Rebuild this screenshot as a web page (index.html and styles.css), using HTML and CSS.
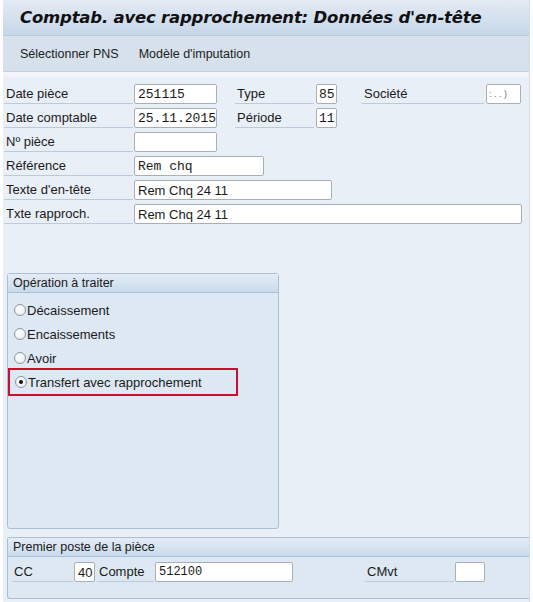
FILE: index.html
```html
<!DOCTYPE html>
<html lang="fr">
<head>
  <meta charset="UTF-8" />
  <title>Comptab. avec rapprochement</title>
  <link rel="stylesheet" href="styles.css">
</head>
<body>

<div class="frame">
  <div class="titlebar">
    <h1>Comptab. avec rapprochement: Données d'en-tête</h1>
  </div>

  <div class="toolbar">
    <span class="tool">Sélectionner PNS</span>
    <span class="tool">Modèle d'imputation</span>
  </div>

  <div class="main">
    <div class="fields">
      <div class="row">
        <span class="lbl w-left">Date pièce</span>
        <span class="inp mono w-date">251115</span>
        <span class="lbl w-mid">Type</span>
        <span class="inp mono w-small">85</span>
        <span class="lbl w-soc">Société</span>
        <span class="inp w-soc-inp">: . . )</span>
      </div>
      <div class="row">
        <span class="lbl w-left">Date comptable</span>
        <span class="inp mono w-date">25.11.2015</span>
        <span class="lbl w-mid">Période</span>
        <span class="inp mono w-small">11</span>
      </div>
      <div class="row">
        <span class="lbl w-left">Nº pièce</span>
        <span class="inp mono w-date"></span>
      </div>
      <div class="row">
        <span class="lbl w-left">Référence</span>
        <span class="inp mono w-ref">Rem chq</span>
      </div>
      <div class="row">
        <span class="lbl w-left">Texte d'en-tête</span>
        <span class="inp w-text">Rem Chq 24 11</span>
      </div>
      <div class="row">
        <span class="lbl w-left">Txte rapproch.</span>
        <span class="inp w-long">Rem Chq 24 11</span>
      </div>
    </div>

    <div class="group group-op">
      <div class="group-head">Opération à traiter</div>
      <div class="radios">
        <div class="radio"><span class="dot"></span>Décaissement</div>
        <div class="radio"><span class="dot"></span>Encaissements</div>
        <div class="radio"><span class="dot"></span>Avoir</div>
        <div class="radio selected"><span class="dot on"></span>Transfert avec rapprochement</div>
      </div>
    </div>

    <div class="group group-post">
      <div class="group-head">Premier poste de la pièce</div>
      <div class="row post-row">
        <span class="lbl w-cc">CC</span>
        <span class="inp w-cc-inp">40</span>
        <span class="lbl w-compte">Compte</span>
        <span class="inp mono w-compte-inp">512100</span>
        <span class="lbl w-cmvt">CMvt</span>
        <span class="inp w-cmvt-inp"></span>
      </div>
    </div>
  </div>
</div>

</body>
</html>
```

FILE: styles.css
```css
* {
  box-sizing: border-box;
  margin: 0;
  padding: 0;
}

body {
  background: #ffffff;
  font-family: 'Liberation Sans', Arial, sans-serif;
  font-size: 13px;
  color: #1a1a1a;
  width: 533px;
  height: 602px;
  overflow: hidden;
}

.frame {
  margin-left: 3px;
  width: 527px;
  height: 602px;
  background: #e9eff7;
  border-right: 1px solid #d3dde8;
}

.titlebar {
  height: 36px;
  background: linear-gradient(#e3ebf4, #c6d6e8);
  border-bottom: 1px solid #b9cadd;
  padding-left: 17px;
  display: flex;
  align-items: center;
}

h1 {
  font-family: 'DejaVu Sans', sans-serif;
  font-size: 16.5px;
  font-weight: bold;
  font-style: italic;
  color: #111;
  letter-spacing: -0.2px;
}

.toolbar {
  height: 36px;
  background: #d6e1ec;
  border-bottom: 1px solid #c3d0de;
  display: flex;
  align-items: center;
  gap: 20px;
  padding-left: 17px;
  font-size: 12.5px;
  color: #222;
}

.main {
  border-top: 5px solid #f1f5f9;
  padding-top: 7px;
}

.fields {
  display: flex;
  flex-direction: column;
  gap: 4px;
}

.row {
  display: flex;
  align-items: stretch;
  height: 20px;
}

.lbl {
  display: flex;
  align-items: center;
  border-bottom: 1px solid #bccad9;
  padding-left: 2px;
  white-space: nowrap;
}

.inp {
  display: flex;
  align-items: center;
  background: #ffffff;
  border: 1px solid #a9afb7;
  border-radius: 2px;
  padding-left: 3px;
  white-space: nowrap;
  overflow: hidden;
}

.mono {
  font-family: 'Liberation Mono', 'Courier New', monospace;
  font-size: 13px;
}

.w-left { width: 129px; margin-left: 1px; margin-right: 1px; }
.w-date { width: 83px; }
.w-mid { width: 79px; margin-left: 18px; margin-right: 2px; }
.w-small { width: 21px; padding-left: 2px; }
.w-soc { width: 122px; margin-left: 25px; margin-right: 2px; }
.w-soc-inp { width: 35px; font-size: 9px; color: #777; padding-left: 2px; }
.w-ref { width: 130px; }
.w-text { width: 198px; }
.w-long { width: 388px; }

.group {
  background: #dde8f3;
  border: 1px solid #a9bfd8;
  border-radius: 3px;
  margin-left: 4px;
}

.group-head {
  height: 19px;
  background: linear-gradient(#e4edf6, #c9daec);
  border-bottom: 1px solid #a9bfd8;
  padding-left: 5px;
  display: flex;
  align-items: center;
  font-size: 12.5px;
}

.group-op {
  width: 272px;
  height: 256px;
  margin-top: 49px;
}

.radios {
  display: flex;
  flex-direction: column;
  gap: 4px;
  padding: 7px 0 0 3px;
}

.radio {
  display: flex;
  align-items: center;
  height: 20px;
  width: 225px;
  padding-left: 3px;
  gap: 1px;
}

.radio.selected {
  outline: 2px solid #c8102e;
  outline-offset: 2px;
  margin-left: 1px;
  width: 222px;
}

.dot {
  width: 12px;
  height: 12px;
  border-radius: 50%;
  border: 1px solid #8c96a2;
  background: radial-gradient(circle at 40% 35%, #ffffff, #e4e8ec);
  position: relative;
}

.dot.on::after {
  content: "";
  position: absolute;
  left: 3px;
  top: 3px;
  width: 4px;
  height: 4px;
  border-radius: 50%;
  background: #111;
}

.group-post {
  margin-top: 8px;
  height: 62px;
  border-right: none;
  border-radius: 3px 0 0 3px;
}

.post-row {
  margin-top: 5px;
}

.w-cc { width: 61px; margin-left: 4px; margin-right: 1px; }
.w-cc-inp { width: 21px; padding-left: 3px; }
.w-compte { width: 57px; margin-left: 2px; margin-right: 1px; }
.w-compte-inp { width: 138px; font-size: 12px; }
.w-cmvt { width: 89px; margin-left: 72px; margin-right: 1px; }
.w-cmvt-inp { width: 30px; }
```
